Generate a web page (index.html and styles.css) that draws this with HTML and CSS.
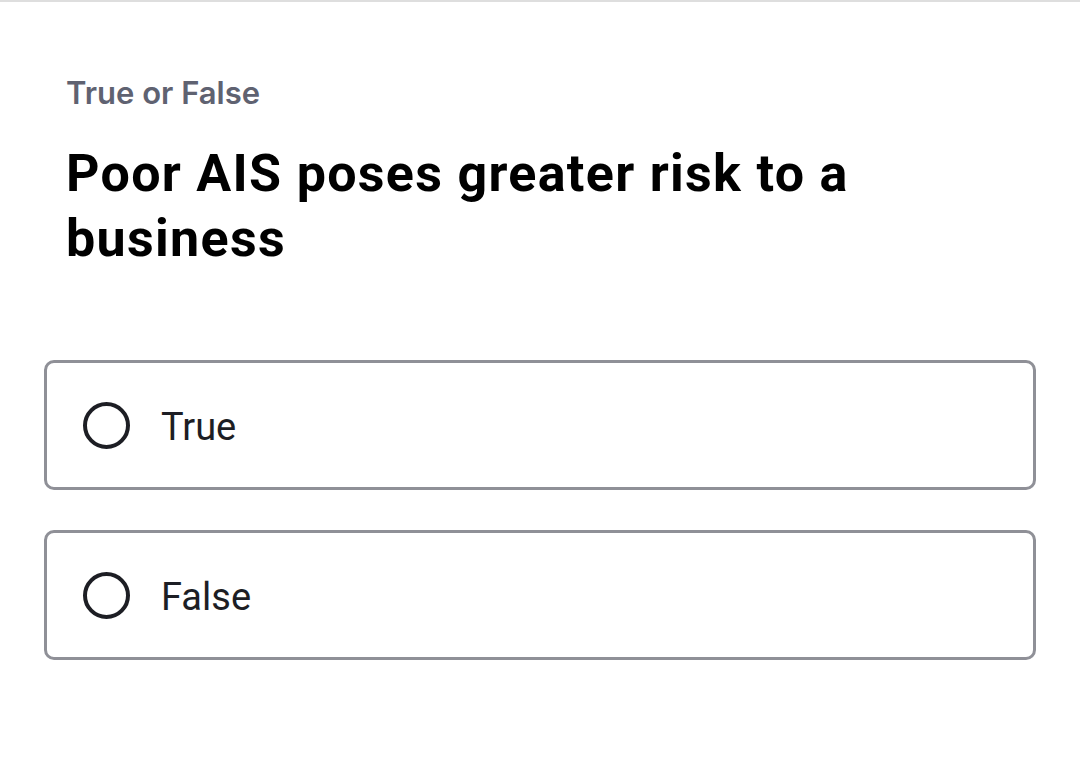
FILE: index.html
```html
<!DOCTYPE html>
<html>
<head>
<meta charset="utf-8">
<link rel="stylesheet" href="styles.css">
</head>
<body>
<div class="page">
  <div class="header">
    <div class="kind">True or False</div>
    <h1 class="question">Poor AIS poses greater risk to a business</h1>
  </div>
  <div class="options">
    <label class="option">
      <span class="radio"></span>
      <span class="option-text">True</span>
    </label>
    <label class="option">
      <span class="radio"></span>
      <span class="option-text">False</span>
    </label>
  </div>
</div>
</body>
</html>
```

FILE: styles.css
```css
html, body {
  margin: 0;
  padding: 0;
  background: #ffffff;
}
body {
  border-top: 2px solid #dedede;
  height: 765px;
  overflow: hidden;
}
.page {
  padding: 0 44px;
}
.header {
  padding: 71px 23px 0 22px;
}
.kind {
  font-family: Inter, "Liberation Sans", sans-serif;
  font-weight: 600;
  font-size: 31px;
  line-height: 40px;
  color: #5f6271;
}
.question {
  margin: 28px 0 0 0;
  font-family: Roboto, "Liberation Sans", sans-serif;
  font-weight: 700;
  font-size: 52px;
  line-height: 65px;
  letter-spacing: 1.3px;
  color: #000000;
  max-width: 880px;
}
.options {
  margin-top: 89px;
  display: flex;
  flex-direction: column;
  gap: 40px;
}
.option {
  display: flex;
  align-items: center;
  box-sizing: border-box;
  height: 130px;
  border: 3px solid #8f9097;
  border-radius: 10px;
  padding: 0 0 0 36px;
}
.radio {
  width: 47px;
  height: 47px;
  box-sizing: border-box;
  border: 4px solid #1d1e24;
  border-radius: 50%;
  flex: none;
}
.option-text {
  margin-left: 31px;
  padding-top: 4px;
  font-family: Roboto, "Liberation Sans", sans-serif;
  font-size: 38px;
  color: #1d1e24;
}
```
